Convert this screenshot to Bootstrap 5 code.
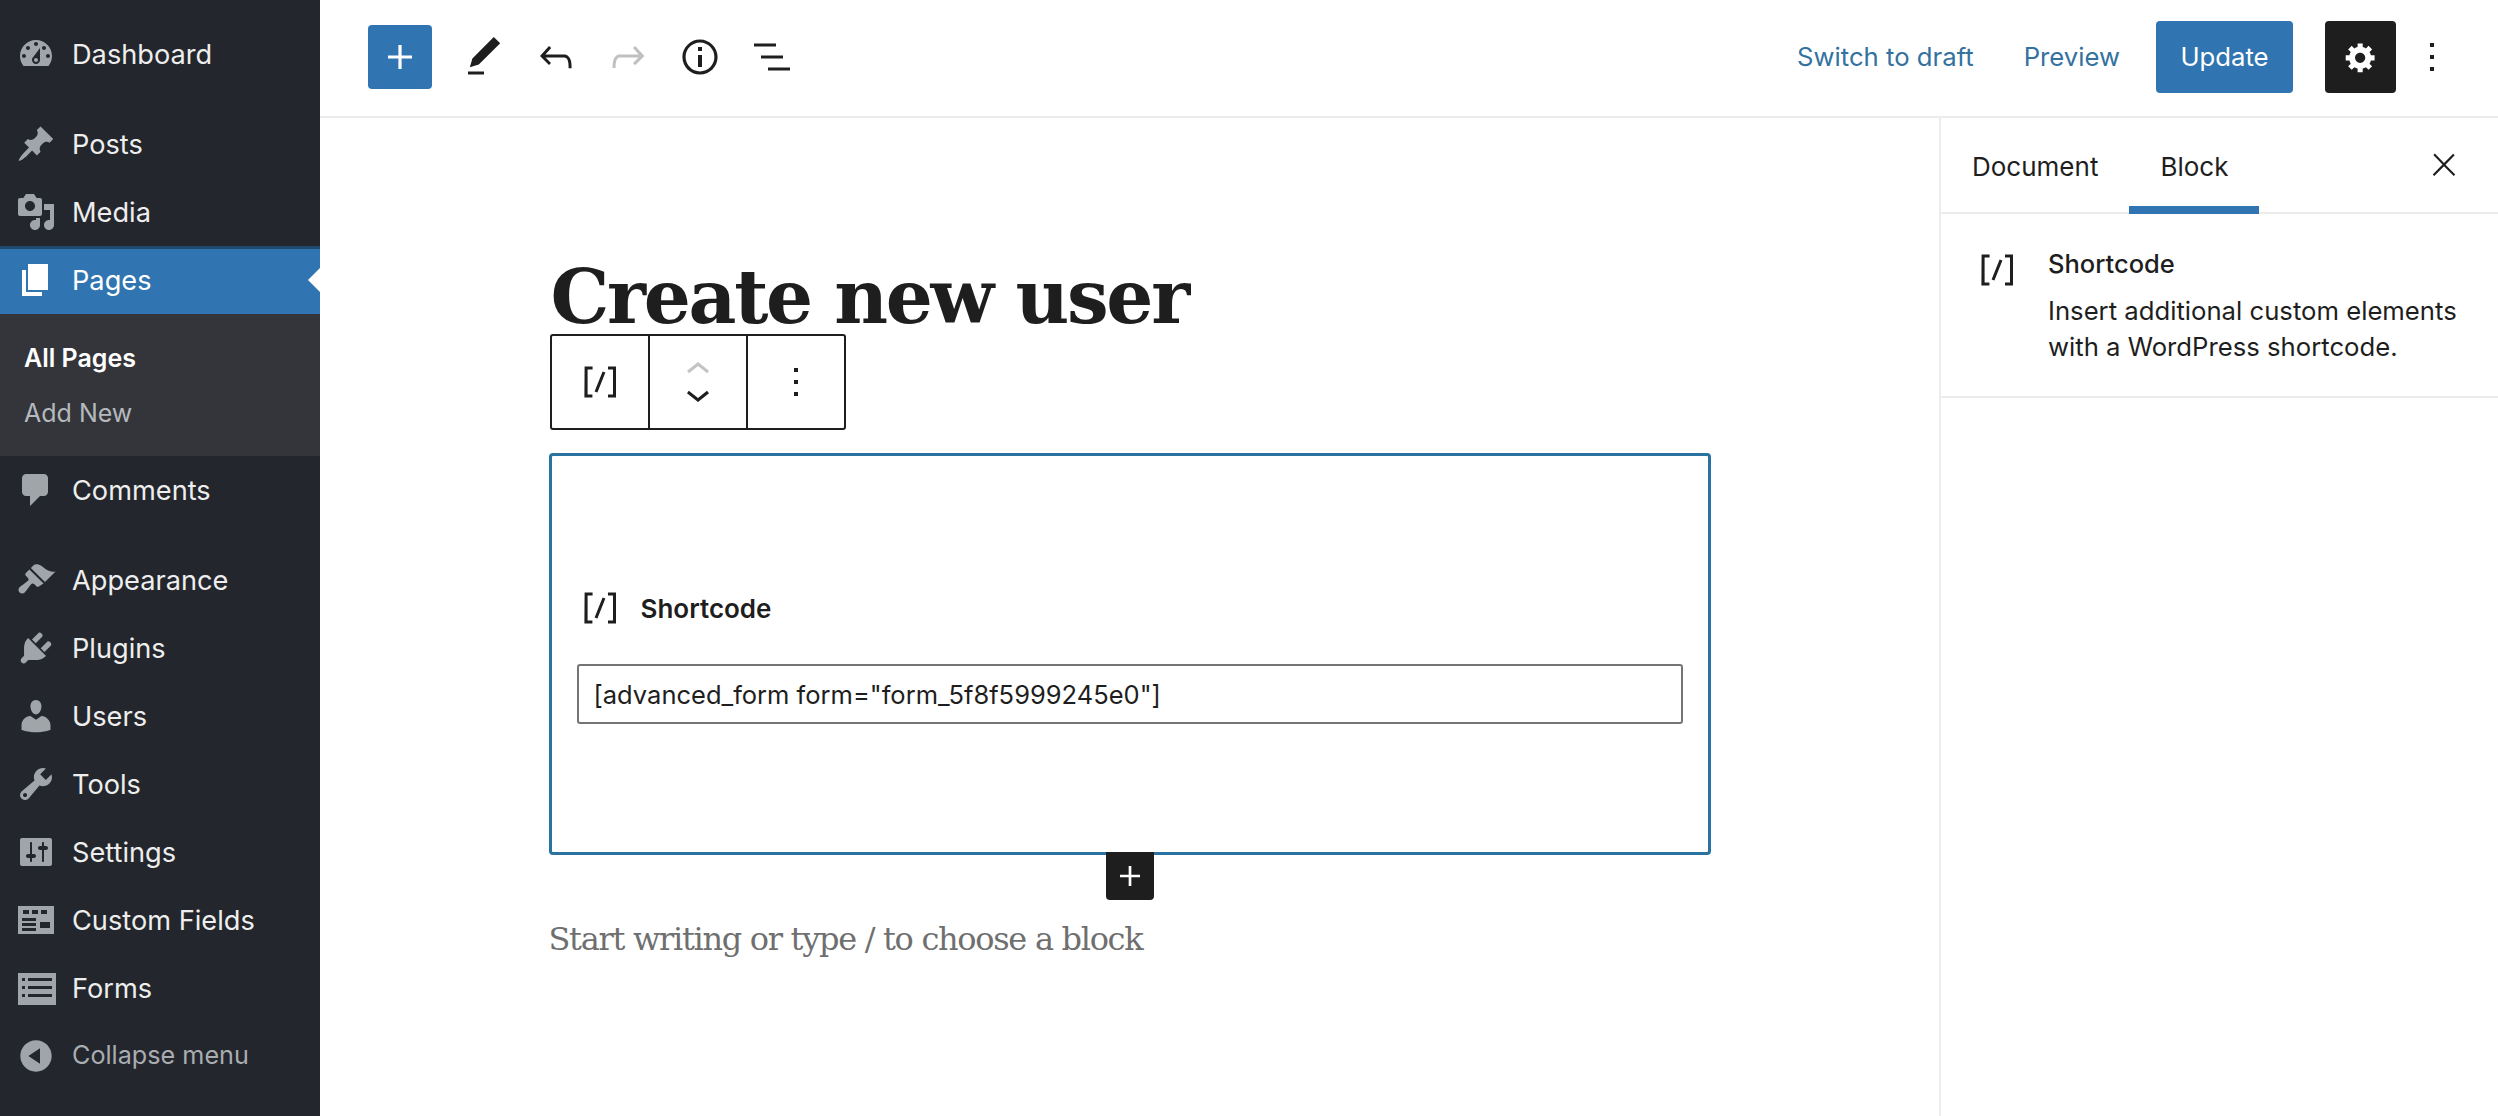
<!DOCTYPE html>
<html lang="en">
<head>
<meta charset="utf-8">
<title>Edit Page</title>
<link href="https://cdn.jsdelivr.net/npm/bootstrap@5.3.0/dist/css/bootstrap.min.css" rel="stylesheet">
<style>
:root{--wpblue:#3075b1;--ink:#1e1e1e;}
html,body{height:100%;}
body{font-family:Inter,"Liberation Sans",sans-serif;color:var(--ink);background:#fff;overflow:hidden;}
.shell{height:1116px;}
.wp-side{width:320px;flex:none;background:#23262c;padding-top:20px;}
.wp-item{height:68px;padding:2px 0 0 16px;color:#eee;font-size:27.2px;gap:16px;text-decoration:none;}
.wp-item svg{width:40px;height:40px;flex:none;fill:#a0a5aa;margin-top:-2px;}
.wp-gap{margin-top:22px;}
.wp-active{background:var(--wpblue);color:#fff;position:relative;box-shadow:inset 0 3px 0 #1f4a70;}
.wp-active svg{fill:#fff;}
.wp-active::after{content:"";position:absolute;right:0;top:22px;border:12px solid transparent;border-right-color:#fff;border-left:0;}
.wp-sub{height:142px;background:#33353a;padding:17px 24px;font-size:25px;}
.wp-sub div{height:55px;display:flex;align-items:center;color:#b4b9be;}
.wp-sub .on{color:#fff;font-weight:600;}
.wp-item.wp-collapse{color:#a9adb1;font-size:25.2px;padding-top:0;}
.wp-collapse svg{margin-top:0;}
.top{height:118px;border-bottom:2px solid #ececec;padding:0 42px 2px 48px;flex:none;}
.tb-add{width:64px;height:64px;background:var(--wpblue);border-radius:4px;padding:0;border:0;margin-right:4px;}
.tb-ico{width:48px;height:48px;fill:var(--ink);display:block;flex:none;}
.tb-add .tb-ico{fill:#fff;margin:8px;}
.tb-ico.tb-muted{fill:#c0c0c0;}
.tools-l{gap:24px;}
.link-top{color:#33729f;font-size:25.7px;text-decoration:none;}
.link-gap{margin-left:50px;}
.btn-upd{background:var(--wpblue);color:#fff;font-size:25.7px;width:137px;height:72px;border-radius:4px;border:0;padding:0;margin-left:36px;}
.btn-gear{background:var(--ink);width:71px;height:72px;border-radius:4px;border:0;padding:0;margin-left:32px;}
.btn-gear svg{width:34px;height:34px;fill:#fff;display:block;margin:auto;}
.kebab{margin-left:12px;width:48px;height:48px;fill:var(--ink);}
.editor{padding-top:141px;}
.col-edit{width:1162px;margin:0 auto;}
.title{font-family:"DejaVu Serif","Liberation Serif",serif;font-weight:700;font-size:74px;line-height:76px;letter-spacing:-2.3px;margin:0 0 0 2px;color:var(--ink);white-space:nowrap;}
.blk-bar{width:296px;height:96px;border:2px solid var(--ink);border-radius:3px;margin:-1px 0 23px 1px;background:#fff;}
.blk-bar>div{flex:1;border-right:2px solid var(--ink);}
.blk-bar>div:last-child{border:0;}
.blk-bar svg{fill:var(--ink);}
.ic48{width:48px;height:48px;}
.mover svg{width:48px;height:48px;display:block;margin:-12px 0;}
.blk-bar .mover .up{fill:#c4c4c4;}
.blk{height:402px;border:3px solid #2a72a0;border-radius:4px;padding:0 25px;position:relative;}
.blk-head{margin-top:127px;font-size:26px;font-weight:600;gap:17px;height:50px;}
.blk-head svg{width:48px;height:48px;fill:var(--ink);margin-left:-1px;}
.sc-input.form-control{height:60px;margin-top:31px;border:2px solid #757575;border-radius:3px;font-size:25.5px;padding:0 15px;color:var(--ink);box-shadow:none;font-family:Inter,sans-serif;}
.adder{position:absolute;left:554px;top:396px;width:48px;height:48px;background:var(--ink);border-radius:0 0 4px 4px;}
.adder svg{width:40px;height:40px;fill:#fff;display:block;margin:4px;}
.hint{margin:62px 0 0 0;font-family:"DejaVu Serif","Liberation Serif",serif;font-size:32px;line-height:44px;letter-spacing:-1.3px;color:#6f6f6f;white-space:nowrap;}
.panel{width:559px;flex:none;border-left:2px solid #ececec;}
.p-tabs{height:96px;border-bottom:2px solid #ececec;padding:3px 0 0 31px;position:relative;font-size:26px;}
.p-tab{height:91px;line-height:92px;}
.p-tab.sel{position:relative;margin-left:31px;padding:0 31px;}
.p-tab.sel::after{content:"";position:absolute;left:0;right:0;bottom:-2px;height:8px;background:var(--wpblue);}
.p-x{width:36px;height:36px;fill:var(--ink);margin:-4px 36px 0 auto;}
.p-info{padding:24px 0 30px 32px;height:184px;border-bottom:2px solid #ececec;gap:28px;}
.p-info svg{width:48px;height:48px;fill:var(--ink);flex:none;margin:8px -1px 0 0;}
.p-name{font-size:25.5px;font-weight:500;line-height:36px;margin-top:8px;}
.p-desc{font-size:25.7px;line-height:36px;margin-top:11px;white-space:nowrap;}
</style>
</head>
<body>
<div class="shell d-flex">
  <nav class="wp-side d-flex flex-column">
    <a class="wp-item d-flex align-items-center"><svg viewBox="0 0 20 20"><path d="M3.76 16h12.48c1.1-1.37 1.76-3.11 1.76-5 0-4.42-3.58-8-8-8s-8 3.58-8 8c0 1.89.66 3.63 1.76 5zM10 4c.55 0 1 .45 1 1s-.45 1-1 1-1-.45-1-1 .45-1 1-1zM6 6c.55 0 1 .45 1 1s-.45 1-1 1-1-.45-1-1 .45-1 1-1zm8 0c.55 0 1 .45 1 1s-.45 1-1 1-1-.45-1-1 .45-1 1-1zm-5.37 5.55L12 7v6c0 1.1-.9 2-2 2s-2-.9-2-2c0-.57.24-1.08.63-1.45zM4 10c.55 0 1 .45 1 1s-.45 1-1 1-1-.45-1-1 .45-1 1-1zm12 0c.55 0 1 .45 1 1s-.45 1-1 1-1-.45-1-1 .45-1 1-1zm-5 3c0-.55-.45-1-1-1s-1 .45-1 1 .45 1 1 1 1-.45 1-1z" fill-rule="evenodd"/></svg>Dashboard</a>
    <a class="wp-item wp-gap d-flex align-items-center"><svg viewBox="0 0 20 20"><path d="M10.44 3.02l1.82-1.82 6.36 6.35-1.83 1.82c-1.05-.68-2.48-.57-3.41.36l-.75.75c-.92.93-1.04 2.35-.35 3.41l-1.83 1.82-2.41-2.41-2.8 2.79c-.42.42-3.38 2.71-3.8 2.29s1.86-3.39 2.28-3.81l2.79-2.79L4.1 9.36l1.83-1.82c1.05.69 2.48.57 3.4-.36l.75-.75c.93-.92 1.05-2.35.36-3.41z"/></svg>Posts</a>
    <a class="wp-item d-flex align-items-center"><svg viewBox="0 0 20 20"><path d="M13 11V4c0-.55-.45-1-1-1h-1.67L9 1H5L3.67 3H2c-.55 0-1 .45-1 1v7c0 .55.45 1 1 1h10c.55 0 1-.45 1-1zM7 4.5c1.38 0 2.5 1.12 2.5 2.5S8.38 9.5 7 9.5 4.5 8.38 4.5 7 5.62 4.5 7 4.5zM14 6h5v10.5c0 1.38-1.12 2.5-2.5 2.5S14 17.88 14 16.5s1.12-2.5 2.5-2.5c.17 0 .34.02.5.05V9h-3V6zm-4 8.05V13h2v3.5c0 1.38-1.12 2.5-2.5 2.5S7 17.88 7 16.5 8.12 14 9.5 14c.17 0 .34.02.5.05z"/></svg>Media</a>
    <a class="wp-item wp-active d-flex align-items-center"><svg viewBox="0 0 20 20"><path d="M6 15V2h10v13H6zm-1 1h8v2H3V5h2v11z"/></svg>Pages</a>
    <div class="wp-sub"><div class="on">All Pages</div><div>Add New</div></div>
    <a class="wp-item d-flex align-items-center"><svg viewBox="0 0 20 20"><path d="M5 2h9c1.1 0 2 .9 2 2v7c0 1.1-.9 2-2 2h-2l-5 5v-5H5c-1.1 0-2-.9-2-2V4c0-1.1.9-2 2-2z"/></svg>Comments</a>
    <a class="wp-item wp-gap d-flex align-items-center"><svg viewBox="0 0 20 20"><path d="M14.48 11.06L7.41 3.99l1.5-1.5c.5-.56 2.3-.47 3.51.32 1.21.8 1.43 1.28 2.91 2.1 1.18.64 2.45 1.26 4.45.85zm-.71.71L6.7 4.7 4.93 6.47c-.39.39-.39 1.02 0 1.41l1.06 1.06c.39.39.39 1.03 0 1.42-.6.6-3.5 2.6-4.1 3.2-.8.8-.9 1.9-.1 2.7s1.9.7 2.7-.1c.6-.6 2.6-3.5 3.2-4.1.39-.39 1.03-.39 1.42 0l1.06 1.06c.39.39 1.02.39 1.41 0z"/></svg>Appearance</a>
    <a class="wp-item d-flex align-items-center"><svg viewBox="0 0 20 20"><path d="M13.11 4.36L9.87 7.6 8 5.73l3.24-3.24c.35-.34 1.05-.2 1.56.32.52.51.66 1.21.31 1.55zm-8 1.77l.91-1.12 9.01 9.01-1.19.84c-.71.71-2.63 1.16-3.82 1.16H6.14L4.9 17.26c-.59.59-1.54.59-2.12 0-.59-.58-.59-1.53 0-2.12l1.24-1.24v-3.88c0-1.13.4-3.19 1.09-3.89zm7.26 3.97l3.24-3.24c.34-.35 1.04-.21 1.55.31.52.51.66 1.21.31 1.55l-3.24 3.25z"/></svg>Plugins</a>
    <a class="wp-item d-flex align-items-center"><svg viewBox="0 0 20 20"><path d="M10 9.25c-2.27 0-2.73-3.44-2.73-3.44C7 4.02 7.82 2 9.97 2c2.16 0 2.98 2.02 2.71 3.81 0 0-.41 3.44-2.68 3.44zm0 2.57L12.72 10c2.39 0 4.52 2.33 4.52 4.53v2.49s-3.65 1.13-7.24 1.13c-3.65 0-7.24-1.13-7.24-1.13v-2.49c0-2.25 1.94-4.48 4.47-4.48z"/></svg>Users</a>
    <a class="wp-item d-flex align-items-center"><svg viewBox="0 0 20 20"><path d="M16.68 9.77c-1.34 1.34-3.3 1.67-4.95.99l-5.41 6.52c-.99.99-2.59.99-3.58 0s-.99-2.59 0-3.57l6.52-5.42c-.68-1.65-.35-3.61.99-4.95 1.28-1.28 3.12-1.62 4.72-1.06l-2.89 2.89 2.82 2.82 2.86-2.87c.53 1.58.18 3.39-1.08 4.65zM3.81 16.21c.4.39 1.04.39 1.43 0 .4-.4.4-1.04 0-1.43-.39-.4-1.03-.4-1.43 0-.39.39-.39 1.03 0 1.43z"/></svg>Tools</a>
    <a class="wp-item d-flex align-items-center"><svg viewBox="0 0 20 20"><path d="M18 16V4c0-.55-.45-1-1-1H3c-.55 0-1 .45-1 1v12c0 .55.45 1 1 1h14c.55 0 1-.45 1-1zM8 11h1c.55 0 1 .45 1 1s-.45 1-1 1H8v1.5c0 .28-.22.5-.5.5s-.5-.22-.5-.5V13H6c-.55 0-1-.45-1-1s.45-1 1-1h1V5.5c0-.28.22-.5.5-.5s.5.22.5.5V11zm5-2h-1c-.55 0-1-.45-1-1s.45-1 1-1h1V5.5c0-.28.22-.5.5-.5s.5.22.5.5V7h1c.55 0 1 .45 1 1s-.45 1-1 1h-1v5.5c0 .28-.22.5-.5.5s-.5-.22-.5-.5V9z"/></svg>Settings</a>
    <a class="wp-item d-flex align-items-center"><svg viewBox="0 0 20 20"><path fill-rule="evenodd" d="M1 3h18v14H1zM3.5 5v2h3V5zm4.5 0v2h3V5zm4.5 0v2h3V5zM3 9v1.5h7V9zm0 2.5V13h7v-1.5zM3 14v1.5h7V14zm9-3v3h5v-3z"/></svg>Custom Fields</a>
    <a class="wp-item d-flex align-items-center"><svg viewBox="0 0 20 20"><path fill-rule="evenodd" d="M1 2.5h19v16H1zM3 5v1.5h1.5V5zm3 0v1.5h12V5zM3 9v1.5h1.5V9zm3 0v1.5h12V9zM3 13v1.5h1.5V13zm3 0v1.5h12V13z"/></svg>Forms</a>
    <a class="wp-item wp-collapse d-flex align-items-center"><svg viewBox="0 0 20 20"><path d="M10 2.16c4.33 0 7.84 3.51 7.84 7.84s-3.51 7.84-7.84 7.84S2.16 14.33 2.16 10 5.71 2.16 10 2.16zm2 11.72V6.12L6.18 9.97z"/></svg>Collapse menu</a>
  </nav>
  <div class="flex-grow-1 d-flex flex-column">
    <header class="top d-flex align-items-center">
      <div class="tools-l d-flex align-items-center">
        <button class="tb-add" aria-label="Add block"><svg class="tb-ico" viewBox="0 0 24 24"><path d="M18 11.2h-5.2V6h-1.6v5.2H6v1.6h5.2V18h1.6v-5.2H18z"/></svg></button>
        <svg class="tb-ico" viewBox="0 0 24 24"><path d="M20.1 5.1L16.9 2 6.2 12.7l-1.3 4.4 4.5-1.3L20.1 5.1zM4 20.8h8v-1.5H4v1.5z"/></svg>
        <svg class="tb-ico" viewBox="0 0 24 24"><path d="M18.3 11.7c-.6-.6-1.4-.9-2.3-.9H6.7l2.9-3.3-1.1-1-4.5 5L8.5 16l1-1-2.7-2.7H16c.5 0 .9.2 1.3.5 1 1 1 3.4 1 4.5v.3h1.5v-.2c0-1.5 0-4.3-1.5-5.7z"/></svg>
        <svg class="tb-ico tb-muted" viewBox="0 0 24 24"><path d="M15.6 6.5l-1.1 1 2.9 3.3H8c-.9 0-1.7.3-2.3.9-1.4 1.5-1.4 4.2-1.4 5.6v.2h1.5v-.3c0-1.1 0-3.5 1-4.5.3-.3.7-.5 1.3-.5h9.2L14.5 15l1.1 1.1 4.6-4.6-4.6-5z"/></svg>
        <svg class="tb-ico" viewBox="0 0 24 24"><path d="M12 3.2c-4.8 0-8.8 3.9-8.8 8.8 0 4.8 3.9 8.8 8.8 8.8 4.8 0 8.8-3.9 8.8-8.8 0-4.8-4-8.8-8.8-8.8zm0 16c-4 0-7.2-3.3-7.2-7.2C4.8 8 8 4.8 12 4.8s7.2 3.3 7.2 7.2c0 4-3.2 7.2-7.2 7.2zM11 17h2v-6h-2v6zm0-8h2V7h-2v2z"/></svg>
        <svg class="tb-ico" viewBox="0 0 24 24"><path d="M3 5.2h11v1.5H3zM6.5 11.2h11v1.5h-11zM10 17.2h11v1.5H10z"/></svg>
      </div>
      <div class="ms-auto d-flex align-items-center">
        <a class="link-top">Switch to draft</a>
        <a class="link-top link-gap">Preview</a>
        <button class="btn-upd">Update</button>
        <button class="btn-gear" aria-label="Settings"><svg viewBox="0 0 20 20"><path fill-rule="evenodd" d="M18 12h-2.18c-.17.7-.44 1.35-.81 1.93l1.54 1.54-2.1 2.1-1.54-1.54c-.58.36-1.23.63-1.91.79V19H8v-2.18c-.68-.16-1.33-.43-1.91-.79l-1.54 1.54-2.12-2.12 1.54-1.54c-.36-.58-.63-1.23-.79-1.91H1V9.03h2.17c.16-.7.44-1.35.8-1.94L2.43 5.55l2.1-2.1 1.54 1.54c.58-.37 1.24-.64 1.93-.81V2h3v2.18c.68.16 1.33.43 1.91.79l1.54-1.54 2.12 2.12-1.54 1.54c.36.59.64 1.24.8 1.94H18V12zm-8.5 1.5c1.66 0 3-1.34 3-3s-1.34-3-3-3-3 1.34-3 3 1.34 3 3 3z"/></svg></button>
        <svg class="kebab" viewBox="0 0 24 24"><path d="M13 19h-2v-2h2v2zm0-6h-2v-2h2v2zm0-6h-2V5h2v2z"/></svg>
      </div>
    </header>
    <div class="flex-grow-1 d-flex">
      <main class="editor flex-grow-1">
        <div class="col-edit">
          <h1 class="title">Create new user</h1>
          <div class="blk-bar d-flex">
            <div class="d-flex align-items-center justify-content-center"><svg class="ic48" viewBox="0 0 24 24"><path d="M16 4.2v1.5h2.5v12.5H16v1.5h4V4.2h-4zM4.2 19.8h4v-1.5H5.8V5.8h2.5V4.2h-4l-.1 15.6zm5.1-3.1l1.4.6 4-10-1.4-.6-4 10z"/></svg></div>
            <div class="mover d-flex flex-column align-items-center justify-content-center"><svg class="up" viewBox="0 0 24 24"><path d="M6.5 12.4L12 8l5.5 4.4-.9 1.2L12 10l-4.5 3.6-1-1.2z"/></svg><svg viewBox="0 0 24 24"><path d="M17.5 11.6L12 16l-5.5-4.4.9-1.2L12 14l4.5-3.6 1 1.2z"/></svg></div>
            <div class="d-flex align-items-center justify-content-center"><svg class="ic48" viewBox="0 0 24 24"><path d="M13 19h-2v-2h2v2zm0-6h-2v-2h2v2zm0-6h-2V5h2v2z"/></svg></div>
          </div>
          <section class="blk">
            <div class="blk-head d-flex align-items-center"><svg viewBox="0 0 24 24"><path d="M16 4.2v1.5h2.5v12.5H16v1.5h4V4.2h-4zM4.2 19.8h4v-1.5H5.8V5.8h2.5V4.2h-4l-.1 15.6zm5.1-3.1l1.4.6 4-10-1.4-.6-4 10z"/></svg>Shortcode</div>
            <input class="form-control sc-input" type="text" value='[advanced_form form="form_5f8f5999245e0"]'>
            <div class="adder"><svg viewBox="0 0 24 24"><path d="M18 11.2h-5.2V6h-1.6v5.2H6v1.6h5.2V18h1.6v-5.2H18z"/></svg></div>
          </section>
          <p class="hint">Start writing or type / to choose a block</p>
        </div>
      </main>
      <aside class="panel">
        <div class="p-tabs d-flex align-items-center">
          <div class="p-tab">Document</div>
          <div class="p-tab sel">Block</div>
          <svg class="p-x" viewBox="0 0 24 24"><path d="M13 11.8l6.1-6.3-1-1-6.1 6.2-6.1-6.3-1 1 6.1 6.3-6.5 6.7 1 1 6.5-6.6 6.5 6.6 1-1z"/></svg>
        </div>
        <div class="p-info d-flex">
          <svg viewBox="0 0 24 24"><path d="M16 4.2v1.5h2.5v12.5H16v1.5h4V4.2h-4zM4.2 19.8h4v-1.5H5.8V5.8h2.5V4.2h-4l-.1 15.6zm5.1-3.1l1.4.6 4-10-1.4-.6-4 10z"/></svg>
          <div>
            <div class="p-name">Shortcode</div>
            <div class="p-desc">Insert additional custom elements<br>with a WordPress shortcode.</div>
          </div>
        </div>
      </aside>
    </div>
  </div>
</div>
<script src="https://cdn.jsdelivr.net/npm/bootstrap@5.3.0/dist/js/bootstrap.bundle.min.js"></script>
</body>
</html>
